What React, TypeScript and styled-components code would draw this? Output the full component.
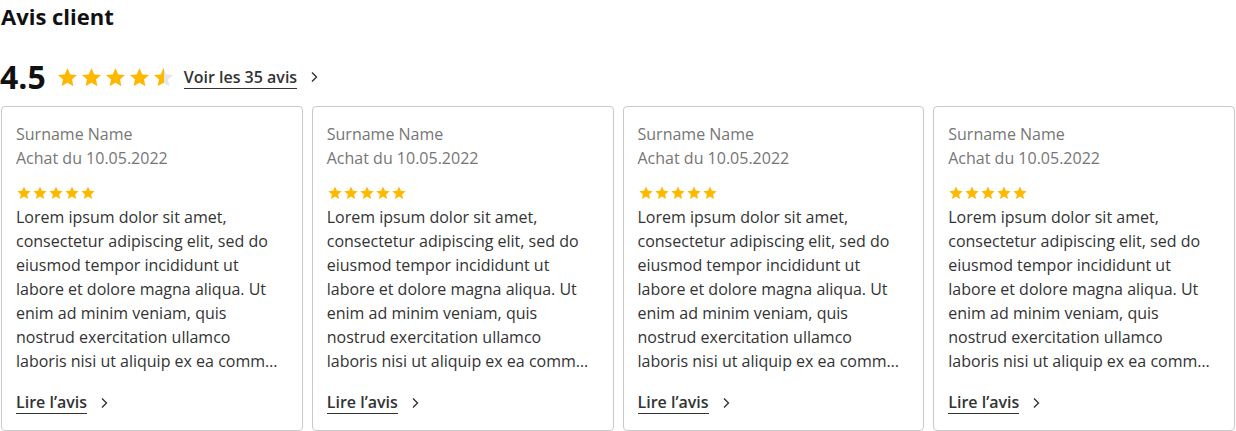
import styled, { createGlobalStyle } from "styled-components";

const GlobalStyle = createGlobalStyle`
  body {
    margin: 0;
    font-family: "Open Sans", "Noto Sans", sans-serif;
    color: #1a1a1a;
    background: #fff;
  }
`;

const Section = styled.section`
  display: flex;
  flex-direction: column;
  padding: 0 0 0 1px;
  width: 1234px;
`;

const Title = styled.h2`
  margin: 0;
  font-size: 22px;
  line-height: 33px;
  font-weight: 700;
  color: #111;
`;

const Summary = styled.div`
  display: flex;
  align-items: center;
  height: 40px;
  margin-top: 24px;
  margin-bottom: 9px;
`;

const Score = styled.span`
  font-size: 32px;
  font-weight: 700;
  line-height: 40px;
  color: #111;
  margin-right: 10px;
  margin-left: -1px;
`;

const Stars = styled.div<{ $gap: number }>`
  display: flex;
  align-items: center;
  gap: ${(p) => p.$gap}px;
`;

const MoreLink = styled.a<{ $size: number }>`
  display: inline-flex;
  align-items: center;
  gap: 13px;
  color: #333;
  text-decoration: none;
  font-size: ${(p) => p.$size}px;
  font-weight: 600;
  cursor: pointer;
`;

const LinkText = styled.span`
  border-bottom: 1.5px solid #333;
  line-height: 22px;
`;

const Cards = styled.div`
  display: grid;
  grid-template-columns: repeat(4, 1fr);
  gap: 9px;
`;

const Card = styled.article`
  border: 1px solid #c9c9c9;
  border-radius: 4px;
  padding: 15px 20px 15px 14px;
  display: flex;
  flex-direction: column;
  height: 325px;
  box-sizing: border-box;
`;

const Meta = styled.div`
  font-size: 16px;
  line-height: 24px;
  color: #767676;
`;

const CardStars = styled.div`
  margin-top: 15px;
  margin-bottom: 4px;
`;

const Body = styled.p`
  margin: 0;
  font-size: 16px;
  line-height: 24px;
  color: #333;
  display: -webkit-box;
  -webkit-line-clamp: 7;
  -webkit-box-orient: vertical;
  overflow: hidden;
`;

const CardFooter = styled.div`
  margin-top: 18px;
`;

const STAR =
  "M12 2.2l2.9 6.6 7.1.6-5.4 4.7 1.6 7L12 17.4l-6.2 3.7 1.6-7L2 9.4l7.1-.6z";

const Star = ({ size, fill = 1, id }: { size: number; fill?: number; id: string }) => (
  <svg width={size} height={size} viewBox="0 0 24 24">
    <defs>
      <linearGradient id={id}>
        <stop offset={fill} stopColor="#ffb800" />
        <stop offset={fill} stopColor="#e6e6e6" />
      </linearGradient>
    </defs>
    <path d={STAR} fill={`url(#${id})`} />
  </svg>
);

const Chevron = () => (
  <svg width="8" height="12" viewBox="0 0 8 12">
    <path d="M2 1.5l4.5 4.5L2 10.5" fill="none" stroke="#333" strokeWidth="1.4" />
  </svg>
);

const EXCERPT =
  "Lorem ipsum dolor sit amet, consectetur adipiscing elit, sed do eiusmod tempor incididunt ut labore et dolore magna aliqua. Ut enim ad minim veniam, quis nostrud exercitation ullamco laboris nisi ut aliquip ex ea comm…";

const reviews = [1, 2, 3, 4].map((n) => ({
  id: n,
  name: "Surname Name",
  date: "10.05.2022",
  rating: 5,
  text: EXCERPT,
}));

export default function App() {
  const score = 4.5;
  return (
    <>
      <GlobalStyle />
      <Section>
        <Title>Avis client</Title>
        <Summary>
          <Score>{score}</Score>
          <Stars $gap={1}>
            {[0, 1, 2, 3, 4].map((i) => (
              <Star
                key={i}
                id={`hs${i}`}
                size={23}
                fill={Math.max(0, Math.min(1, score - i))}
              />
            ))}
          </Stars>
          <MoreLink $size={16} style={{ marginLeft: 9 }}>
            <LinkText>Voir les 35 avis</LinkText>
            <Chevron />
          </MoreLink>
        </Summary>
        <Cards>
          {reviews.map((r) => (
            <Card key={r.id}>
              <Meta>{r.name}</Meta>
              <Meta>Achat du {r.date}</Meta>
              <CardStars>
                <Stars $gap={0}>
                  {Array.from({ length: r.rating }).map((_, i) => (
                    <Star key={i} id={`c${r.id}s${i}`} size={16} />
                  ))}
                </Stars>
              </CardStars>
              <Body>{r.text}</Body>
              <CardFooter>
                <MoreLink $size={16}>
                  <LinkText>Lire l’avis</LinkText>
                  <Chevron />
                </MoreLink>
              </CardFooter>
            </Card>
          ))}
        </Cards>
      </Section>
    </>
  );
}
